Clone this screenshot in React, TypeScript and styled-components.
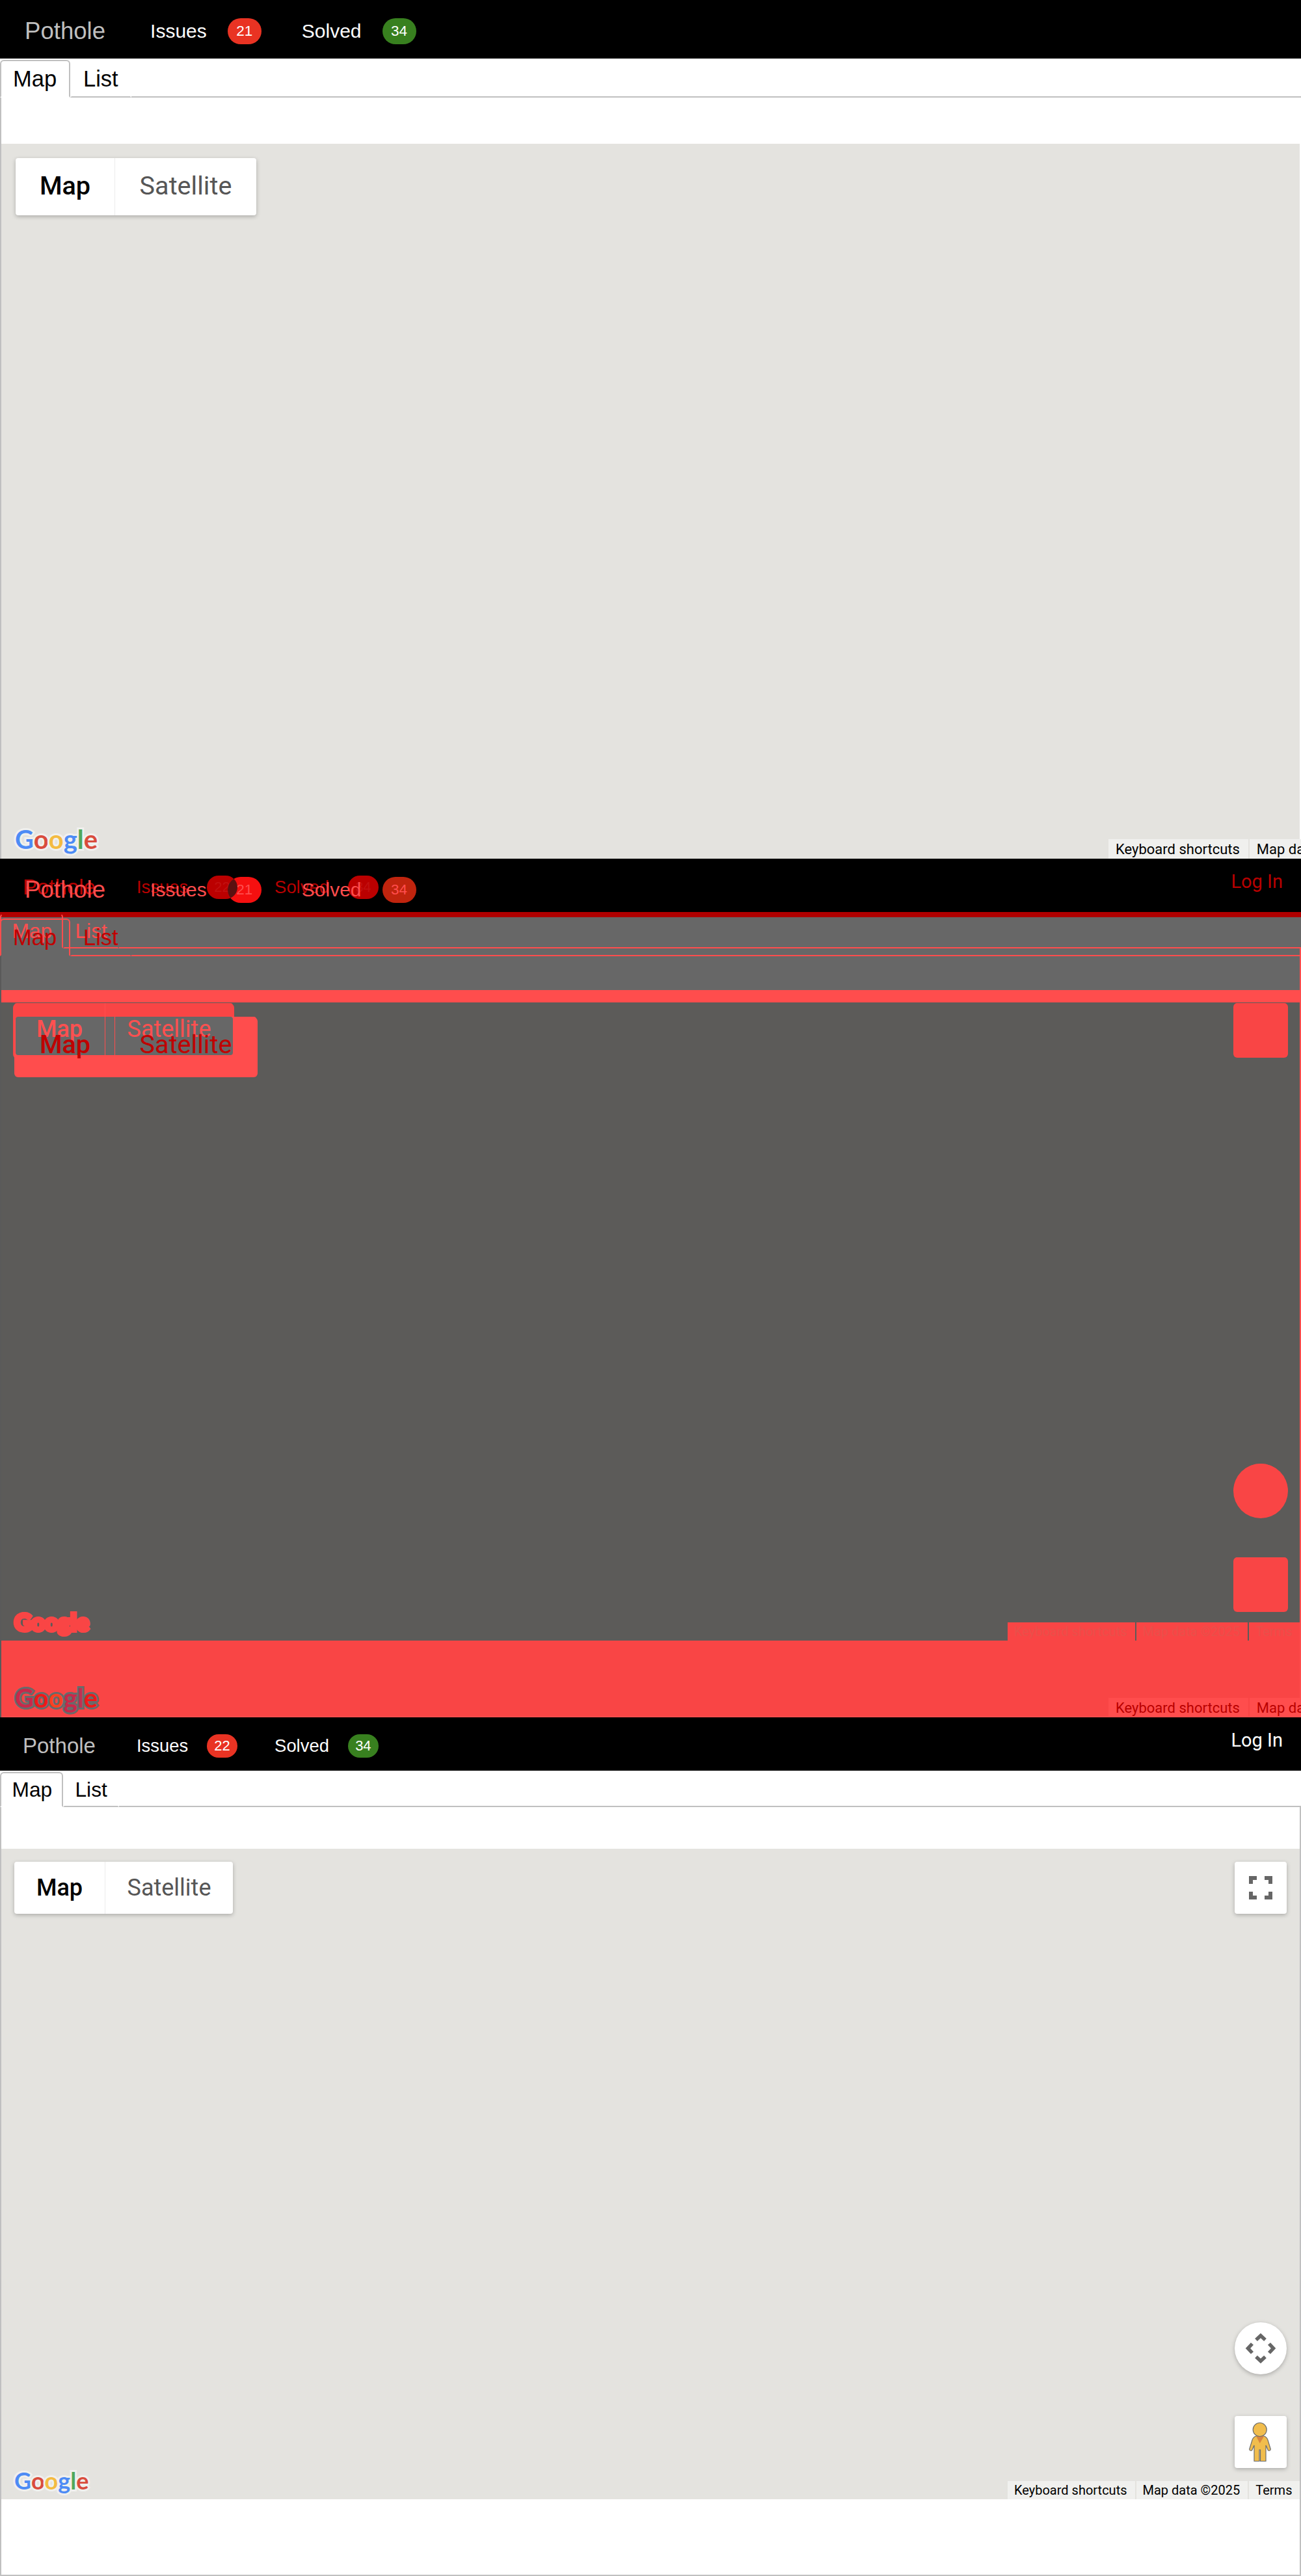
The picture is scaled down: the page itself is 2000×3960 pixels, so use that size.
import React from 'react';
import styled, { ThemeProvider, createGlobalStyle } from 'styled-components';

// two page sizes: the wide one has no login or right side controls
const wide = {
  navH: 90, navLeft: 38, navRight: 28, brandSize: 36.6, brandGap: 69, linkSize: 30, badgeGap: 32, linkGap: 62,
  badgeW: 52, badgeH: 40, badgeSize: 22.5, tabTop: 2, tabH: 58, tabSize: 34.5, tabPad: 18, tabW: 108, gapTop: 71,
  mapH: 1100, inset: 22, ctrlH: 88, ctrlLift: 3, mapW: 152, satW: 218, ctrlSize: 39.6, footSize: 22, footLeft: 1702, footH: 31,
  footPadL: 11, footPadR: 13, logoSize: 40, logoLeft: 21, logoBottom: 11, contentH: 1200, full: false,
};

const narrow = {
  navH: 82, navLeft: 35, navRight: 28, brandSize: 33, brandGap: 63, linkSize: 27.4, badgeGap: 29, linkGap: 57,
  badgeW: 47, badgeH: 36, badgeSize: 22, tabTop: 2, tabH: 54, tabSize: 31.7, tabPad: 16.5, tabW: 97, gapTop: 64,
  mapH: 1000, inset: 20, ctrlH: 80, ctrlLift: 0, mapW: 139, satW: 197, ctrlSize: 36, footSize: 20, footLeft: 1547, footH: 28,
  footPadL: 10, footPadR: 12, logoSize: 36, logoLeft: 20, logoBottom: 11, contentH: 1182, full: true,
};

const plain = {
  nav: '#000', brand: '#bfbfbf', link: '#fff', red: '#e93323', green: '#38801f', redText: '#fff', greenText: '#fff',
  tabText: '#000', line: '#c0c0c0', tabTopLine: '#c0c0c0', edge: '#c0c0c0', edgeRight: '#c0c0c0', map: '#e4e3df', ctrlBg: '#fff',
  ctrlShadow: '0 2px 6px rgba(0, 0, 0, 0.25)', mapText: '#000', satText: '#565656', divider: '#ececec',
  footBg: '#f0f0ee', footText: '#000', halo: '#f0f0ee', blue: '#4d8bf5', tomato: '#d94c3d', yellow: '#f4bb41', leaf: '#4fa85c',
  toolBg: '#fff', toolShadow: '0 2px 6px rgba(0, 0, 0, 0.25)', icons: true,
};

const diffWide = {
  ...plain,
  nav: 'transparent', brand: '#ff4d4d', link: '#ff4d4d', red: '#f51010', green: '#c0240e', redText: '#ff4d4d', greenText: '#ff4d4d',
  tabText: '#c00000', line: '#ff4d4d', tabTopLine: '#ff4d4d', edge: '#5a5a5a', edgeRight: 'transparent', map: 'transparent', ctrlBg: 'transparent',
  ctrlShadow: 'none', mapText: '#c00000', satText: '#c00000', divider: '#ff4d4d', footBg: '#ff4d4d', footText: '#b90000',
  halo: '#6a6a6a', blue: '#c8284a', tomato: '#f01818', yellow: '#ff4020', leaf: '#c03050',
};

const diffNarrow = {
  ...diffWide,
  brand: '#b80000', link: '#b80000', red: '#bb0000', green: '#bb0000', redText: '#c21010', greenText: '#c21010',
  tabText: '#ff5050', tabTopLine: 'transparent', mapText: '#ff5050', satText: '#ff5050', edgeRight: '#ff4d4d', footBg: '#f94545', footText: '#e9504a',
  halo: '#f94545', blue: '#f94545', tomato: '#f94545', yellow: '#f94545', leaf: '#f94545',
  toolBg: '#f94545', toolShadow: '0 2px 0 2px #f94545', icons: false,
};

const t = (key: string) => (p: any) => p.theme[key];
const px = (key: string) => (p: any) => `${p.theme[key]}px`;

const GlobalStyle = createGlobalStyle`
  html, body {
    margin: 0;
    background: #fff;
    font-family: "Liberation Sans", Arial, sans-serif;
  }
`;

const Panel = styled.section`
  position: relative;
  height: 1320px;
  overflow: hidden;
`;

const Layer = styled.div`
  position: absolute;
  inset: 0;
`;

const Nav = styled.nav`
  display: flex;
  align-items: center;
  height: ${px('navH')};
  padding: 5px ${px('navRight')} 0 ${px('navLeft')};
  box-sizing: border-box;
  background: ${t('nav')};
`;

const Brand = styled.a`
  margin-right: ${px('brandGap')};
  font-size: ${px('brandSize')};
  color: ${t('brand')};
`;

const NavLink = styled.a`
  margin-right: ${px('badgeGap')};
  font-size: ${px('linkSize')};
  color: ${t('link')};
`;

const Badge = styled.span<{ $solved?: boolean }>`
  display: flex;
  align-items: center;
  justify-content: center;
  width: ${px('badgeW')};
  height: ${px('badgeH')};
  margin-right: ${px('linkGap')};
  border-radius: 999px;
  font-size: ${px('badgeSize')};
  background: ${(p) => (p.$solved ? p.theme.green : p.theme.red)};
  color: ${(p) => (p.$solved ? p.theme.greenText : p.theme.redText)};
`;

const LogIn = styled.a`
  margin: -18px 0 0 auto;
  font-family: Roboto, sans-serif;
  font-size: 29px;
  color: ${t('link')};
`;

const TabBar = styled.div`
  display: flex;
  height: ${px('tabH')};
  margin-top: ${px('tabTop')};
`;

const Tab = styled.a<{ $active?: boolean }>`
  box-sizing: border-box;
  display: flex;
  align-items: center;
  padding: 0 ${px('tabPad')};
  border: 2px solid ${(p) => (p.$active ? p.theme.line : 'transparent')};
  border-top-color: ${(p) => (p.$active ? p.theme.tabTopLine : 'transparent')};
  border-bottom: ${(p) => (p.$active ? '2px solid transparent' : `2px solid ${p.theme.line}`)};
  border-radius: 6px 6px 0 0;
  font-size: ${px('tabSize')};
  color: ${t('tabText')};
  width: ${(p) => (p.$active ? `${p.theme.tabW}px` : 'auto')};
`;

const TabRest = styled.div`
  flex: 1;
  border-bottom: 2px solid ${t('line')};
`;

const Content = styled.div`
  box-sizing: border-box;
  height: ${px('contentH')};
  padding-top: ${px('gapTop')};
  border-left: 2px solid ${t('edge')};
  border-right: 2px solid ${(p) => (p.theme.full ? p.theme.edgeRight : 'transparent')};
  border-bottom: 2px solid ${(p) => (p.theme.full ? p.theme.edgeRight : 'transparent')};
`;

const MapPane = styled.div`
  position: relative;
  height: ${px('mapH')};
  background: ${t('map')};
  font-family: Roboto, sans-serif;
`;

const MapType = styled.div`
  position: absolute;
  top: ${px('inset')};
  left: ${px('inset')};
  display: flex;
  height: ${px('ctrlH')};
  border-radius: 4px;
  background: ${t('ctrlBg')};
  box-shadow: ${t('ctrlShadow')};
`;

const MapTypeButton = styled.button<{ $active?: boolean }>`
  width: ${(p) => (p.$active ? p.theme.mapW : p.theme.satW)}px;
  padding: 0 0 ${px('ctrlLift')};
  border: 0;
  border-left: ${(p) => (p.$active ? '0' : `1px solid ${p.theme.divider}`)};
  background: transparent;
  font-family: Roboto, sans-serif;
  font-size: ${px('ctrlSize')};
  font-weight: ${(p) => (p.$active ? 500 : 400)};
  color: ${(p) => (p.$active ? p.theme.mapText : p.theme.satText)};
`;

const ToolButton = styled.div<{ $round?: boolean }>`
  display: flex;
  align-items: center;
  justify-content: center;
  width: 80px;
  height: 80px;
  border-radius: ${(p) => (p.$round ? '50%' : '4px')};
  background: ${t('toolBg')};
  box-shadow: ${t('toolShadow')};
`;

const FullscreenSlot = styled.div`
  position: absolute;
  top: 20px;
  right: 20px;
`;

const BottomTools = styled.div`
  position: absolute;
  right: 20px;
  bottom: 48px;
  display: flex;
  flex-direction: column;
  gap: 64px;
`;

const Footer = styled.div`
  position: absolute;
  left: ${px('footLeft')};
  bottom: 0;
  display: flex;
  gap: 2px;
  height: ${px('footH')};
  white-space: nowrap;
`;

const FooterItem = styled.span`
  display: flex;
  align-items: center;
  padding: 0 ${px('footPadR')} 0 ${px('footPadL')};
  background: ${t('footBg')};
  font-size: ${px('footSize')};
  color: ${t('footText')};
`;

const Logo = styled.div`
  position: absolute;
  left: ${px('logoLeft')};
  bottom: ${px('logoBottom')};
  font-family: Lato, sans-serif;
  font-size: ${px('logoSize')};
  font-weight: 700;
  line-height: 1;
  paint-order: stroke fill;
  -webkit-text-stroke: 6px ${t('halo')};
`;

const LogoLetter = styled.span<{ $tone: string }>`
  color: ${(p) => p.theme[p.$tone]};
`;

const Band = styled.div<{ $h: number; $bg: string }>`
  height: ${(p) => p.$h}px;
  background: ${(p) => p.$bg};
`;

// where the two map type boxes differ and where they agree
const DiffFill = styled.div<{ $l: number; $t: number; $w: number; $h: number; $bg: string; $edge?: boolean }>`
  position: absolute;
  left: ${(p) => p.$l}px;
  top: ${(p) => p.$t}px;
  width: ${(p) => p.$w}px;
  height: ${(p) => p.$h}px;
  border-radius: 4px;
  background: ${(p) => p.$bg};
  box-shadow: ${(p) => (p.$edge ? `0 3px 0 2px ${p.$bg}` : 'none')};
`;

const BadgeLens = styled.div`
  position: absolute;
  left: 318px;
  top: 26px;
  width: 47px;
  height: 36px;
  border-radius: 999px;
  overflow: hidden;
`;

const BadgeLensFill = styled.div`
  position: absolute;
  left: 32px;
  top: 2px;
  width: 52px;
  height: 40px;
  border-radius: 999px;
  background: #5a1010;
`;

const FullscreenIcon = () => (
  <svg width="36" height="36" viewBox="0 0 36 36" fill="#666">
    <path d="M0 0h12v6H6v6H0z" />
    <path d="M24 0h12v12h-6V6h-6z" />
    <path d="M0 24h6v6h6v6H0z" />
    <path d="M30 24h6v12H24v-6h6z" />
  </svg>
);

const CompassIcon = () => (
  <svg width="80" height="80" viewBox="0 0 80 80" fill="none" stroke="#666" strokeWidth="5.5">
    <polyline points="33,27 40,20.5 47,27" />
    <polyline points="33,53 40,59.5 47,53" />
    <polyline points="27,33 20.5,40 27,47" />
    <polyline points="53,33 59.5,40 53,47" />
  </svg>
);

const Pegman = () => (
  <svg width="80" height="80" viewBox="0 0 80 80">
    <path
      d="M33 31C29 32 28 34 27 37L22.700 51Q23 54 26.500 53L30 45V69.500H38V52H39.500V69.500H48V45L51.500 53Q55 54 55.300 51L51 37C50 34 49 32 45 31Z"
      fill="#f1bd4d"
      stroke="#6b6b6b"
      strokeWidth="1.2"
    />
    <path d="M33 31H45.300L38.700 42Z" fill="#d9853f" />
    <circle cx="38.700" cy="21" r="10.500" fill="#f1bd4d" stroke="#6b6b6b" strokeWidth="1.2" />
  </svg>
);

const Screen = ({ size, colors, issues }: { size: any; colors: any; issues: number }) => (
  <ThemeProvider theme={{ ...size, ...colors }}>
    <Nav>
      <Brand>Pothole</Brand>
      <NavLink>Issues</NavLink>
      <Badge>{issues}</Badge>
      <NavLink>Solved</NavLink>
      <Badge $solved>34</Badge>
      {size.full && <LogIn>Log In</LogIn>}
    </Nav>
    <TabBar>
      <Tab $active>Map</Tab>
      <Tab>List</Tab>
      <TabRest />
    </TabBar>
    <Content>
      <MapPane>
        <MapType>
          <MapTypeButton $active>Map</MapTypeButton>
          <MapTypeButton>Satellite</MapTypeButton>
        </MapType>
        {size.full && (
          <>
            <FullscreenSlot>
              <ToolButton>{colors.icons && <FullscreenIcon />}</ToolButton>
            </FullscreenSlot>
            <BottomTools>
              <ToolButton $round>{colors.icons && <CompassIcon />}</ToolButton>
              <ToolButton>{colors.icons && <Pegman />}</ToolButton>
            </BottomTools>
          </>
        )}
        <Logo>
          <LogoLetter $tone="blue">G</LogoLetter>
          <LogoLetter $tone="tomato">o</LogoLetter>
          <LogoLetter $tone="yellow">o</LogoLetter>
          <LogoLetter $tone="blue">g</LogoLetter>
          <LogoLetter $tone="leaf">l</LogoLetter>
          <LogoLetter $tone="tomato">e</LogoLetter>
        </Logo>
        <Footer>
          <FooterItem>Keyboard shortcuts</FooterItem>
          <FooterItem>Map data ©2025</FooterItem>
          <FooterItem>Terms</FooterItem>
        </Footer>
      </MapPane>
    </Content>
  </ThemeProvider>
);

export default function App() {
  return (
    <>
      <GlobalStyle />
      <Panel>
        <Screen size={wide} colors={plain} issues={21} />
      </Panel>
      <Panel>
        <Band $h={82} $bg="#000" />
        <Band $h={8} $bg="#b00000" />
        <Band $h={112} $bg="#676767" />
        <Band $h={19} $bg="#ff4d4d" />
        <Band $h={981} $bg="#5c5b59" />
        <Band $h={118} $bg="#f94545" />
        <DiffFill $l={22} $t={222} $w={336} $h={80} $bg="#f94545" $edge />
        <DiffFill $l={24} $t={243} $w={370} $h={88} $bg="#ff4d4d" $edge />
        <DiffFill $l={24} $t={243} $w={334} $h={59} $bg="#676767" />
        <Layer>
          <Screen size={narrow} colors={diffNarrow} issues={22} />
        </Layer>
        <Layer>
          <Screen size={wide} colors={diffWide} issues={21} />
        </Layer>
        <BadgeLens>
          <BadgeLensFill />
        </BadgeLens>
      </Panel>
      <Panel>
        <Screen size={narrow} colors={plain} issues={22} />
      </Panel>
    </>
  );
}
